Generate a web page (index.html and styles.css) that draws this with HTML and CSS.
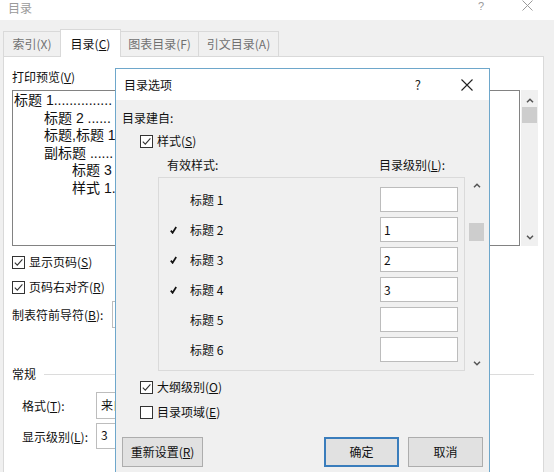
FILE: index.html
```html
<!DOCTYPE html>
<html lang="zh-CN">
<head>
<meta charset="utf-8">
<title>目录</title>
<link rel="stylesheet" href="styles.css">
</head>
<body>
<div class="win">
  <div class="win-title">
    <span class="win-name">目录</span>
    <span class="win-ctrls">
      <span class="win-help">?</span>
      <svg class="win-close" width="11" height="11" viewBox="0 0 11 11"><path d="M0.5 0.5 L10.5 10.5 M10.5 0.5 L0.5 10.5" stroke="#9a9a9a" stroke-width="1" fill="none"/></svg>
    </span>
  </div>

  <div class="tabs">
    <div class="tab t1">索引(X)</div>
    <div class="tab t2 sel">目录(<u>C</u>)</div>
    <div class="tab t3">图表目录(F)</div>
    <div class="tab t4">引文目录(A)</div>
  </div>

  <div class="panel">
    <div class="lbl first">打印预览(<u>V</u>)</div>
    <div class="preview">
      <div class="pv-box">
        <div class="pv-line i0">标题 1...............</div>
        <div class="pv-line i1">标题 2 ......</div>
        <div class="pv-line i1">标题,标题 1</div>
        <div class="pv-line i1">副标题 ......</div>
        <div class="pv-line i2">标题 3</div>
        <div class="pv-line i2">样式 1.</div>
      </div>
      <div class="pv-scroll">
        <svg class="chev" width="8" height="5" viewBox="0 0 8 5"><path d="M1 4.2 L4 1.2 L7 4.2" stroke="#555" stroke-width="1.5" fill="none"/></svg>
        <span class="pv-thumb"></span>
        <span class="pv-fill"></span>
        <svg class="chev" width="8" height="5" viewBox="0 0 8 5"><path d="M1 0.8 L4 3.8 L7 0.8" stroke="#555" stroke-width="1.5" fill="none"/></svg>
      </div>
    </div>
    <div class="cb-row r1"><span class="cb on"><svg width="11" height="11" viewBox="0 0 11 11"><path d="M1.8 5.6 L4.3 8.2 L9.4 2.4" stroke="#333" stroke-width="1.1" fill="none"/></svg></span>显示页码(<u>S</u>)</div>
    <div class="cb-row r2"><span class="cb on"><svg width="11" height="11" viewBox="0 0 11 11"><path d="M1.8 5.6 L4.3 8.2 L9.4 2.4" stroke="#333" stroke-width="1.1" fill="none"/></svg></span>页码右对齐(<u>R</u>)</div>
    <div class="field-row leader">
      <span class="field-lbl w100">制表符前导符(<u>B</u>):</span>
      <span class="combo c-leader"></span>
    </div>
    <div class="group">
      <span class="group-name">常规</span>
      <span class="group-line"></span>
    </div>
    <div class="field-row fmt">
      <span class="field-lbl w74">格式(<u>T</u>):</span>
      <span class="combo c-fmt">来自</span>
    </div>
    <div class="field-row lvl">
      <span class="field-lbl w74">显示级别(<u>L</u>):</span>
      <span class="combo c-lvl">3</span>
    </div>
  </div>

  <div class="dlg">
    <div class="dlg-title">
      <span class="dlg-name">目录选项</span>
      <span class="dlg-help">?</span>
      <svg class="dlg-close" width="12" height="12" viewBox="0 0 12 12"><path d="M0.5 0.5 L11.5 11.5 M11.5 0.5 L0.5 11.5" stroke="#222" stroke-width="1.1" fill="none"/></svg>
    </div>
    <div class="dlg-body">
      <div class="d-head">目录建自:</div>
      <div class="d-cb c-style"><span class="cb on"><svg width="11" height="11" viewBox="0 0 11 11"><path d="M1.8 5.6 L4.3 8.2 L9.4 2.4" stroke="#333" stroke-width="1.1" fill="none"/></svg></span>样式(<u>S</u>)</div>
      <div class="d-cols">
        <span class="col-a">有效样式:</span>
        <span class="col-b">目录级别(<u>L</u>):</span>
      </div>
      <div class="lv-wrap">
        <div class="lv-list">
          <div class="lv-row"><span class="tick"></span><span class="lv-name">标题 1</span><span class="lv-input"></span></div>
          <div class="lv-row"><span class="tick"><svg width="7" height="8" viewBox="0 0 7 8"><path d="M0.8 4.6 L2.6 6.8 L6.2 1" stroke="#111" stroke-width="1.7" fill="none"/></svg></span><span class="lv-name">标题 2</span><span class="lv-input">1</span></div>
          <div class="lv-row"><span class="tick"><svg width="7" height="8" viewBox="0 0 7 8"><path d="M0.8 4.6 L2.6 6.8 L6.2 1" stroke="#111" stroke-width="1.7" fill="none"/></svg></span><span class="lv-name">标题 3</span><span class="lv-input">2</span></div>
          <div class="lv-row"><span class="tick"><svg width="7" height="8" viewBox="0 0 7 8"><path d="M0.8 4.6 L2.6 6.8 L6.2 1" stroke="#111" stroke-width="1.7" fill="none"/></svg></span><span class="lv-name">标题 4</span><span class="lv-input">3</span></div>
          <div class="lv-row"><span class="tick"></span><span class="lv-name">标题 5</span><span class="lv-input"></span></div>
          <div class="lv-row"><span class="tick"></span><span class="lv-name">标题 6</span><span class="lv-input"></span></div>
        </div>
        <div class="lv-scroll">
          <svg class="chev" width="8" height="5" viewBox="0 0 8 5"><path d="M1 4.2 L4 1.2 L7 4.2" stroke="#555" stroke-width="1.5" fill="none"/></svg>
          <span class="lv-gap"></span>
          <span class="lv-thumb"></span>
          <span class="lv-fill"></span>
          <svg class="chev" width="8" height="5" viewBox="0 0 8 5"><path d="M1 0.8 L4 3.8 L7 0.8" stroke="#555" stroke-width="1.5" fill="none"/></svg>
        </div>
      </div>
      <div class="d-cb c-outline"><span class="cb on"><svg width="11" height="11" viewBox="0 0 11 11"><path d="M1.8 5.6 L4.3 8.2 L9.4 2.4" stroke="#333" stroke-width="1.1" fill="none"/></svg></span>大纲级别(<u>O</u>)</div>
      <div class="d-cb c-field"><span class="cb"></span>目录项域(<u>E</u>)</div>
      <div class="d-btns">
        <span class="btn b-reset">重新设置(<u>R</u>)</span>
        <span class="btn b-ok">确定</span>
        <span class="btn b-cancel">取消</span>
      </div>
    </div>
  </div>
</div>
</body>
</html>
```

FILE: styles.css
```css
* { box-sizing: border-box; }

html, body {
  margin: 0;
  padding: 0;
}

body {
  width: 554px;
  height: 472px;
  overflow: hidden;
  background: #f0f0f0;
  font-family: "Noto Sans CJK SC", "Microsoft YaHei", sans-serif;
  font-size: 12px;
  color: #111;
}

u { text-decoration: underline; text-underline-offset: 1px; }

.win {
  position: relative;
  width: 554px;
  height: 472px;
}

/* outer title bar */
.win-title {
  height: 20px;
  background: #fff;
  display: flex;
  justify-content: space-between;
  align-items: flex-start;
}
.win-name {
  margin: 1px 0 0 8px;
  line-height: 14px;
  color: #9a9a9a;
}
.win-ctrls {
  display: flex;
  align-items: flex-start;
  margin-right: 21px;
}
.win-help {
  font-family: "Liberation Sans", "DejaVu Sans", sans-serif;
  color: #9a9a9a;
  font-size: 11px;
  line-height: 13px;
  margin-top: 0;
  margin-right: 38px;
}
.win-close { margin-top: 0; display: block; }

/* tabs */
.tabs {
  height: 36px;
  display: flex;
  align-items: flex-end;
  padding-left: 3px;
}
.tab {
  height: 25px;
  border: 1px solid #d9d9d9;
  border-bottom: none;
  margin-right: -1px;
  background: #f0f0f0;
  color: #707070;
  line-height: 24px;
  text-align: center;
}
.t1 { width: 58px; }
.t2 { width: 61px; }
.t3 { width: 79px; }
.t4 { width: 81px; }
.tab.sel {
  height: 28px;
  margin-bottom: -1px;
  background: #fff;
  color: #111;
  line-height: 28px;
  position: relative;
  z-index: 1;
}

/* panel */
.panel {
  margin-left: 3px;
  width: 541px;
  height: 420px;
  background: #fff;
  border: 1px solid #d9d9d9;
  padding-left: 8px;
}
.lbl { line-height: 16px; }
.lbl.first { margin-top: 12px; }

.preview {
  margin-top: 5px;
  display: flex;
  height: 156px;
}
.pv-box {
  width: 508px;
  height: 156px;
  border: 1px solid #828282;
  overflow: hidden;
  padding-top: 1px;
  font-family: "Liberation Sans", "Noto Sans CJK SC", sans-serif;
  font-size: 14px;
}
.pv-line {
  line-height: 17.6px;
  white-space: nowrap;
  color: #111;
}
.pv-line.i0 { padding-left: 1px; }
.pv-line.i1 { padding-left: 31px; }
.pv-line.i2 { padding-left: 59px; }

.pv-scroll {
  width: 17px;
  margin-left: 1px;
  background: #f0f0f0;
  display: flex;
  flex-direction: column;
  align-items: center;
  padding: 8px 0 6px;
}
.chev { display: block; flex: none; }
.pv-thumb {
  width: 15px;
  height: 16px;
  background: #cdcdcd;
  margin-top: 4px;
}
.pv-fill { flex: 1; }

.cb-row {
  display: flex;
  align-items: center;
  height: 14px;
  line-height: 14px;
}
.cb-row.r1 { margin-top: 9px; }
.cb-row.r2 { margin-top: 11px; }

.cb {
  width: 13px;
  height: 13px;
  border: 1px solid #333;
  background: #fff;
  margin-right: 4px;
  flex: none;
  display: flex;
  align-items: center;
  justify-content: center;
}
.cb svg { display: block; }

.field-row {
  display: flex;
  align-items: center;
}
.field-row.leader { margin-top: 7px; height: 27px; }
.field-row.fmt { margin-top: 10px; height: 27px; padding-left: 10px; }
.field-row.lvl { margin-top: 4px; height: 26px; padding-left: 10px; }
.field-lbl { flex: none; }
.w100 { width: 100px; }
.w74 { width: 74px; }

.combo {
  height: 100%;
  width: 120px;
  border: 1px solid #bdbdbd;
  background: #fff;
  padding-left: 4px;
  line-height: 24px;
}
.c-lvl { line-height: 22px; }

.group {
  margin-top: 38px;
  display: flex;
  align-items: center;
  height: 16px;
  line-height: 16px;
}
.group-line {
  flex: none;
  width: 490px;
  height: 1px;
  background: #dcdcdc;
  margin-left: 8px;
}

/* inner dialog */
.dlg {
  position: absolute;
  left: 115px;
  top: 68px;
  width: 375px;
  height: 420px;
  border: 1px solid #6ea7cb;
  background: #f0f0f0;
  z-index: 5;
}
.dlg-title {
  height: 31px;
  background: #fff;
  display: flex;
  align-items: center;
}
.dlg-name {
  margin-left: 8px;
  line-height: 16px;
  color: #111;
}
.dlg-help {
  margin-left: auto;
  font-size: 13px;
  color: #222;
  line-height: 16px;
}
.dlg-close {
  display: block;
  margin-left: 40px;
  margin-right: 16px;
}

.dlg-body { padding: 0 6px 0 6px; }
.d-head {
  margin-top: 10px;
  line-height: 16px;
}
.d-cb {
  display: flex;
  align-items: center;
  height: 14px;
  line-height: 14px;
  margin-left: 18px;
}
.c-style { margin-top: 8px; }
.c-outline { margin-top: 9px; }
.c-field { margin-top: 11px; }

.d-cols {
  margin-top: 9px;
  display: flex;
  line-height: 16px;
  margin-left: 45px;
}
.col-a { width: 212px; }

.lv-wrap {
  margin-top: 4px;
  margin-left: 36px;
  display: flex;
  height: 194px;
}
.lv-list {
  flex: none;
  width: 307px;
  height: 194px;
  border: 1px solid #dadada;
  padding: 9px 6px 0 11px;
}
.lv-row {
  display: flex;
  align-items: center;
  height: 30px;
  padding-bottom: 5px;
}
.tick {
  width: 7px;
  flex: none;
  display: flex;
  align-items: center;
}
.tick svg { display: block; }
.lv-name {
  margin-left: 13px;
  flex: 1;
  line-height: 16px;
}
.lv-input {
  flex: none;
  width: 78px;
  height: 25px;
  border: 1px solid #bcbcbc;
  background: #fff;
  line-height: 23px;
  padding-left: 3px;
}

.lv-scroll {
  flex: none;
  width: 23px;
  display: flex;
  flex-direction: column;
  align-items: center;
  padding: 6px 0 5px;
}
.lv-gap { height: 35px; flex: none; }
.lv-thumb {
  width: 15px;
  height: 18px;
  background: #cdcdcd;
  flex: none;
}
.lv-fill { flex: 1; }

.d-btns {
  margin-top: 18px;
  display: flex;
  height: 30px;
}
.btn {
  height: 30px;
  background: #e1e1e1;
  border: 1px solid #adadad;
  line-height: 28px;
  text-align: center;
  color: #111;
}
.b-reset { width: 81px; }
.b-ok {
  width: 75px;
  margin-left: auto;
  border: 2px solid #3a7dbc;
  line-height: 26px;
}
.b-cancel {
  width: 75px;
  margin-left: 9px;
}
```
